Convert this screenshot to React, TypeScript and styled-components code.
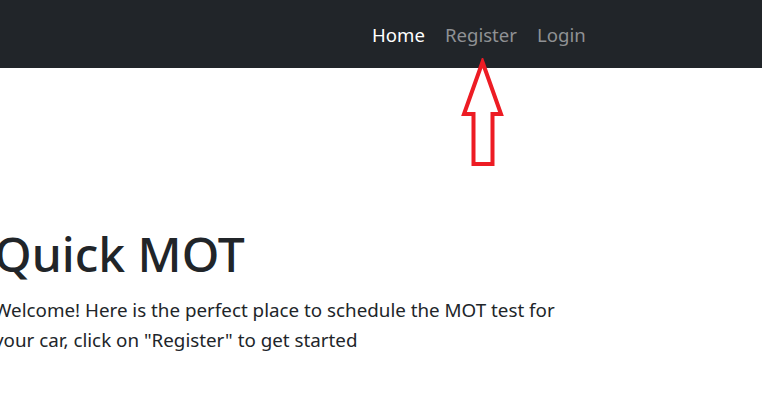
import styled, { createGlobalStyle } from "styled-components";

const GlobalStyle = createGlobalStyle`
    html, body {
        margin: 0;
        padding: 0;
        background: #ffffff;
        font-family: "Noto Sans", "Open Sans", sans-serif;
        color: #212529;
        overflow: hidden;
    }
`;

const Page = styled.div`
    position: relative;
    width: 762px;
    height: 412px;
`;

const Navbar = styled.nav`
    height: 68px;
    background-color: #212529;
    display: flex;
    align-items: center;
`;

const NavList = styled.ul`
    display: flex;
    list-style: none;
    margin: 0 0 0 362px;
    padding: 0;
`;

const NavLink = styled.a<{ $active?: boolean }>`
    display: block;
    padding: 6px 10px;
    font-size: 18.6px;
    text-decoration: none;
    color: ${(props) => (props.$active ? "#ffffff" : "#8f9194")};
`;

const Hero = styled.section`
    margin-left: -6px;
    padding-top: 157px;
`;

const Title = styled.h1`
    margin: 0 0 12px;
    font-size: 48px;
    font-weight: 500;
    line-height: 1.2;
`;

const Lead = styled.p`
    margin: 0;
    width: 572px;
    font-size: 18.8px;
    line-height: 30.5px;
    font-weight: 400;
`;

const Arrow = styled.svg`
    position: absolute;
    left: 460px;
    top: 58px;
`;

function App() {
    return (
        <Page>
            <GlobalStyle />
            <Navbar>
                <NavList>
                    <li><NavLink $active href="#">Home</NavLink></li>
                    <li><NavLink href="#">Register</NavLink></li>
                    <li><NavLink href="#">Login</NavLink></li>
                </NavList>
            </Navbar>
            <Arrow width="46" height="112" viewBox="0 0 46 112">
                <path
                    d="M22.5 4 L41 56 L32.5 56 L32.5 106 L13.5 106 L13.5 56 L4 56 Z"
                    fill="#ffffff"
                    stroke="#ed1c24"
                    strokeWidth="4"
                    strokeLinejoin="miter"
                />
            </Arrow>
            <Hero>
                <Title>Quick MOT</Title>
                <Lead>
                    Welcome! Here is the perfect place to schedule the MOT test for your car, click on "Register" to get started
                </Lead>
            </Hero>
        </Page>
    );
}

export default App;
